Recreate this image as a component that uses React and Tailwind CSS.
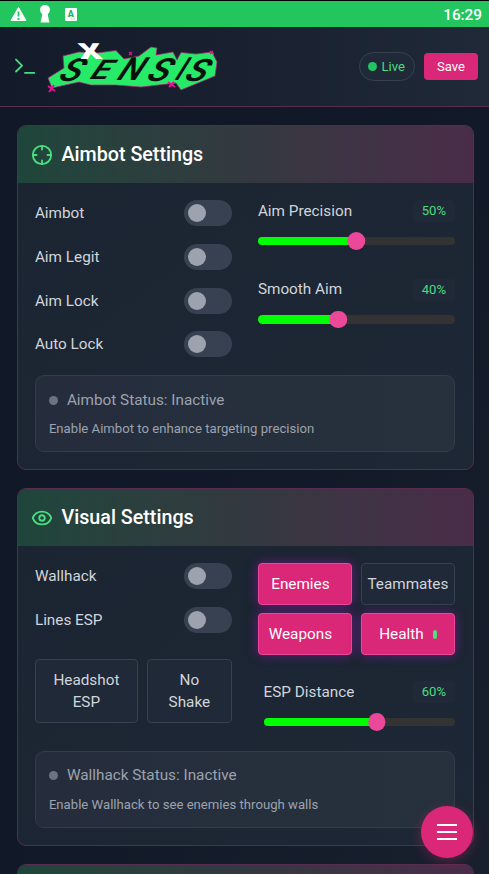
import React from 'react';

function Toggle() {
  return (
    <div className="flex h-[26px] w-[48px] shrink-0 items-center rounded-full bg-[#374151] pl-1">
      <div className="h-[18px] w-[18px] rounded-full bg-[#9ca3af]" />
    </div>
  );
}

function ToggleRow({ label }) {
  return (
    <div className="flex h-[26px] items-center justify-between">
      <span className="pt-[1px]">{label}</span>
      <Toggle />
    </div>
  );
}

function Slider({ label, value }) {
  return (
    <div>
      <div className="flex h-[22px] items-center justify-between">
        <span>{label}</span>
        <span className="flex h-[22px] w-[42px] items-center justify-center rounded-[4px] bg-[#1f2937] text-[13.1px] text-[#4ade80]">
          {value}%
        </span>
      </div>
      <div className="relative mt-[14.5px] h-[8.7px] rounded-full bg-[#333333]">
        <div className="h-full rounded-full bg-[#00ff00]" style={{ width: `${value}%` }} />
        <div
          className="absolute -top-[4.4px] h-[17.4px] w-[17.4px] -translate-x-1/2 rounded-full bg-[#ec4899]"
          style={{ left: `calc(${value}% + ${(50 - value) * 0.17}px)` }}
        />
      </div>
    </div>
  );
}

function Status({ title, text }) {
  return (
    <div className="h-[77px] rounded-[9px] border border-[#323c4a] bg-linear-to-r from-[#252d3c] to-[#27313d] px-[13px] pt-[13.2px] text-[#9ca3af]">
      <div className="flex h-[22px] items-center gap-[9px]">
        <span className="h-[9px] w-[9px] rounded-full bg-[#6b7280]" />
        <span>{title}</span>
      </div>
      <p className="mt-[9.2px] text-[13.15px] leading-[17px]">{text}</p>
    </div>
  );
}

function CardHeader({ icon, title }) {
  return (
    <div className="flex h-[57px] items-center gap-[9px] bg-linear-to-r from-[#1e463b] via-[#333940] to-[#4a2c49] pl-[13px]">
      {icon}
      <h2 className="text-[19.7px] font-medium text-white">{title}</h2>
    </div>
  );
}

function Card({ className, children }) {
  return (
    <section
      className={`overflow-hidden rounded-[9px] border border-[#572c50] bg-linear-to-br from-[#1b2431] to-[#1e2735] ${className}`}
    >
      {children}
    </section>
  );
}

function OptionButton({ active, className = '', children }) {
  return (
    <button
      className={`flex items-center justify-center rounded-[4px] border text-center leading-[22px] ${
        active
          ? 'border-[#ec4899] bg-[#db2777] text-white shadow-[0_0_11px_rgba(168,20,200,0.5)]'
          : 'border-[#374151] bg-[#1f2937] text-[#d1d5db]'
      } ${className}`}
    >
      {children}
    </button>
  );
}

const iconProps = {
  width: 22,
  height: 22,
  viewBox: '0 0 24 24',
  fill: 'none',
  stroke: '#4ade80',
  strokeWidth: 2,
  strokeLinecap: 'round',
  strokeLinejoin: 'round',
};

function CrosshairIcon() {
  return (
    <svg {...iconProps}>
      <circle cx="12" cy="12" r="10" />
      <path d="M22 12h-4M6 12H2M12 6V2M12 22v-4" />
    </svg>
  );
}

function EyeIcon() {
  return (
    <svg {...iconProps}>
      <path d="M2.06 12.35a1 1 0 0 1 0-.7 10.75 10.75 0 0 1 19.88 0 1 1 0 0 1 0 .7 10.75 10.75 0 0 1-19.88 0" />
      <circle cx="12" cy="12" r="3" />
    </svg>
  );
}

function Logo() {
  const letters = [
    { c: 'S', x: 57, y: 81.5, size: 32, wide: 1.15 },
    { c: 'E', x: 89, y: 79.5, size: 27, wide: 1.25 },
    { c: 'N', x: 116, y: 80.5, size: 32, wide: 1.05 },
    { c: 'S', x: 145, y: 81.5, size: 32, wide: 1.15 },
    { c: 'I', x: 174, y: 80.5, size: 32, wide: 0.8 },
    { c: 'S', x: 183, y: 81.5, size: 31, wide: 1.15 },
  ];
  return (
    <svg className="ml-[8px] h-[56px] w-[180px]" viewBox="44 40 180 56">
      <path
        d="M64 69 63 57 79 53 97 54 116 51.500 124 60 139 57 151 48 157 49 156 56 173 53 177 61 181 53.500 196 55 212 53 217 63 215 77 181 91 176 84 141 88 116 86 91 86 79 83 52 89 48 79Z"
        fill="#26ea68"
        stroke="#c01a80"
        strokeWidth=".7"
      />
      <g fill="#07120d" fontFamily="Roboto" fontWeight="600" fontStyle="italic">
        {letters.map(({ c, x, y, size, wide }) => (
          <text key={x} fontSize={size} transform={`translate(${x} ${y}) skewX(-26) scale(${wide} 1)`}>
            {c}
          </text>
        ))}
      </g>
      <text
        transform="translate(80.500 60) skewX(12) scale(1.600 1)"
        fontFamily="Roboto"
        fontWeight="900"
        fontSize="22"
        fill="#fff"
      >
        X
      </text>
      <g stroke="#f50b9b" strokeWidth="2">
        <path d="m48 87 7 5m-1-6-5 7M168 83l7 5m-1-5-5 5" />
        <path d="m129 53 3 3m0-3-3 3M210 52l4 3m-1-3-3 3" strokeWidth="1.1" />
      </g>
    </svg>
  );
}

function StatusBar() {
  return (
    <div className="flex h-[27px] items-center border-t border-black bg-[#22c55e] pr-[7px] pl-[10px]">
      <svg width="72" height="20" viewBox="10 4 72 20">
        <path d="M18.5 7.500 26 20.500H11Z" fill="#fff" stroke="#fff" strokeLinejoin="round" />
        <path d="M18.5 11.500v5m0 1.500v2" stroke="#22c55e" strokeWidth="1.8" />
        <path d="M40 9.500a5 4.500 0 0 1 10 0q0 3-2.300 5L49.500 22.500h-9L42.300 14.500Q40 12.500 40 9.500Z" fill="#fff" />
        <rect x="65" y="8" width="12" height="13" rx="1.300" fill="#fff" />
        <text x="67.800" y="17" fontFamily="Roboto" fontWeight="900" fontSize="9" fill="#22b457">A</text>
        <path d="M71 19h4" stroke="#8bdcaa" strokeDasharray="1 .5" />
      </svg>
      <span className="ml-auto pt-[2px] text-[15.3px] font-medium text-white">16:29</span>
    </div>
  );
}

function Header() {
  return (
    <header className="flex h-[80px] items-center border-b border-[#572c50] bg-linear-to-r from-[#131a29] to-[#202938] pr-[11px] pl-[14px]">
      <svg {...iconProps} className="-mt-px">
        <path d="m2.200 18 6.600-6.500L2.200 5" />
        <path d="M12 19.500h10" />
      </svg>
      <Logo />
      <div className="ml-auto flex items-center gap-[9px]">
        <div className="flex h-[29px] w-[56px] items-center justify-center gap-[4.500px] rounded-full border border-[#374151] bg-[#1f2937] pr-px text-[13.1px] text-[#4ade80]">
          <span className="h-[9px] w-[9px] rounded-full bg-[#22c55e]" />
          Live
        </div>
        <button className="h-[27px] w-[54px] rounded-[4px] bg-[#db2777] text-[13.1px] text-white">Save</button>
      </div>
    </header>
  );
}

export default function App() {
  return (
    <div className="relative h-[874px] w-[489px] overflow-hidden bg-linear-to-br from-[#111827] via-[#111827] to-[#18202e] font-['Roboto',sans-serif] text-[15.3px] text-[#d1d5db]">
      <StatusBar />
      <Header />
      <main className="flex flex-col gap-[18px] pt-[18px] pr-[15.500px] pl-[16.500px]">
        <Card className="h-[345px]">
          <CardHeader icon={<CrosshairIcon />} title="Aimbot Settings" />
          <div className="px-[17.400px] pt-[17px]">
            <div className="grid grid-cols-[197px_197px] gap-[26px]">
              <div className="flex flex-col gap-[17.800px]">
                <ToggleRow label="Aimbot" />
                <ToggleRow label="Aim Legit" />
                <ToggleRow label="Aim Lock" />
                <ToggleRow label="Auto Lock" />
              </div>
              <div className="flex flex-col gap-[33.500px]">
                <Slider label="Aim Precision" value={50} />
                <Slider label="Smooth Aim" value={40} />
              </div>
            </div>
            <div className="mt-[17.600px]">
              <Status title="Aimbot Status: Inactive" text="Enable Aimbot to enhance targeting precision" />
            </div>
          </div>
        </Card>
        <Card className="h-[358px]">
          <CardHeader icon={<EyeIcon />} title="Visual Settings" />
          <div className="px-[17.400px] pt-[17px]">
            <div className="grid grid-cols-[197px_197px] gap-[26px]">
              <div className="flex flex-col gap-[17.800px]">
                <ToggleRow label="Wallhack" />
                <ToggleRow label="Lines ESP" />
                <div className="mt-[8.400px] flex gap-[9px]">
                  <OptionButton className="h-[64px] w-[103px] px-4">Headshot ESP</OptionButton>
                  <OptionButton className="h-[64px] w-[85px] px-4">No Shake</OptionButton>
                </div>
              </div>
              <div>
                <div className="grid grid-cols-2 gap-x-[9px] gap-y-[8.200px]">
                  <OptionButton active className="h-[42px] pr-[9px]">Enemies</OptionButton>
                  <OptionButton className="h-[42px]">Teammates</OptionButton>
                  <OptionButton active className="h-[42px] pr-[9px]">Weapons</OptionButton>
                  <OptionButton active className="h-[42px] gap-[9px]">
                    Health
                    <span className="h-[9px] w-[4px] rounded-[2px] bg-[#4ade80]" />
                  </OptionButton>
                </div>
                <div className="mt-[26px] pl-[5.700px]">
                  <Slider label="ESP Distance" value={60} />
                </div>
              </div>
            </div>
            <div className="mt-[24.300px]">
              <Status title="Wallhack Status: Inactive" text="Enable Wallhack to see enemies through walls" />
            </div>
          </div>
        </Card>
        <Card className="h-[300px] shrink-0">
          <CardHeader title="" />
        </Card>
      </main>
      <button className="absolute top-[806px] left-[421px] flex h-[52px] w-[52px] flex-col items-center justify-center gap-[5px] rounded-full bg-[#db2777] shadow-[0_3px_12px_rgba(219,39,119,0.35)]">
        <span className="h-[2px] w-[20px] bg-white" />
        <span className="h-[2px] w-[20px] bg-white" />
        <span className="h-[2px] w-[20px] bg-white" />
      </button>
    </div>
  );
}
